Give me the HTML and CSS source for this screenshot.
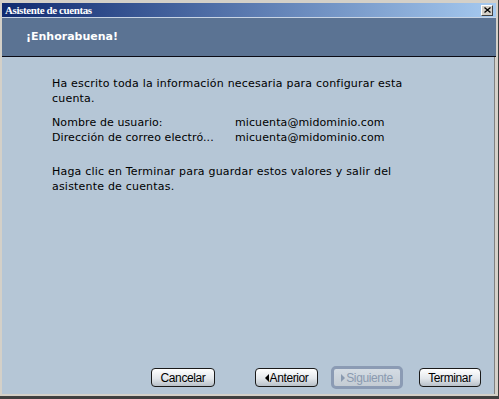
FILE: index.html
```html
<!DOCTYPE html>
<html lang="es">
<head>
  <meta charset="UTF-8" />
  <title>Asistente de cuentas</title>
  <link rel="stylesheet" href="styles.css">
</head>
<body>
<div class="window">
  <div class="titlebar">
    <span class="title">Asistente de cuentas</span>
    <button class="close" aria-label="Cerrar">
      <svg width="7" height="6" viewBox="0 0 7 6"><path d="M0.5 0.5 L6.5 5.5 M6.5 0.5 L0.5 5.5" stroke="#000" stroke-width="1.3" fill="none"/></svg>
    </button>
  </div>
  <div class="header">
    <h1>¡Enhorabuena!</h1>
  </div>
  <main class="body">
    <div class="content">
      <p>Ha escrito toda la información necesaria para configurar esta cuenta.</p>
      <div class="summary">
        <span>Nombre de usuario:</span><span>micuenta@midominio.com</span>
        <span>Dirección de correo electró...</span><span>micuenta@midominio.com</span>
      </div>
      <p>Haga clic en Terminar para guardar estos valores y salir del asistente de cuentas.</p>
    </div>
    <nav class="buttons">
      <button class="btn btn-cancel">Cancelar</button>
      <button class="btn btn-back"><span class="arrow arrow-left"></span>Anterior</button>
      <button class="btn btn-next" disabled><span class="arrow arrow-right"></span>Siguiente</button>
      <button class="btn btn-finish">Terminar</button>
    </nav>
  </main>
</div>
</body>
</html>
```

FILE: styles.css
```css
html, body {
  margin: 0;
  padding: 0;
  width: 499px;
  height: 399px;
  overflow: hidden;
  background: #d4d0c8;
}
.window {
  box-sizing: border-box;
  width: 499px;
  height: 399px;
  padding: 2px 2px 0 2px;
  background: #d4d0c8;
  border-right: 1px solid #404040;
  border-bottom: 3px solid #404040;
  display: flex;
  flex-direction: column;
}
.titlebar {
  height: 14px;
  margin-top: 1px;
  background: linear-gradient(to right, #0f2a70, #a6caf0);
  display: flex;
  align-items: center;
  justify-content: space-between;
  padding: 0 3px 0 3px;
  border-bottom: 1px solid #c8d4e4;
}
.title {
  color: #fff;
  font-family: "Liberation Serif", serif;
  font-weight: bold;
  font-size: 11px;
  letter-spacing: -0.4px;
  line-height: 14px;
}
.close {
  box-sizing: border-box;
  width: 12px;
  height: 11px;
  padding: 0;
  margin: 0;
  background: #d4d0c8;
  border: 1px solid;
  border-color: #fff #404040 #404040 #fff;
  display: flex;
  align-items: center;
  justify-content: center;
}
.header {
  height: 38px;
  background: #5b7393;
  border-bottom: 1px solid #0a0a14;
  display: flex;
  align-items: center;
  padding-left: 24px;
}
.header h1 {
  margin: 0 0 1px 0;
  color: #fff;
  font-family: "DejaVu Sans", sans-serif;
  font-weight: bold;
  font-size: 11px;
}
.body {
  flex: 1;
  background: #b5c6d6;
  display: flex;
  flex-direction: column;
  justify-content: space-between;
  margin-right: 1px;
  border-right: 1px solid #808080;
  margin-bottom: 2px;
}
.content {
  padding: 19px 0 0 50px;
  width: 360px;
  font-family: "DejaVu Sans", sans-serif;
  font-size: 11px;
  letter-spacing: 0.2px;
  line-height: 15px;
  color: #000;
}
.content p {
  margin: 0 0 9px 0;
}
.summary {
  display: grid;
  grid-template-columns: 183px auto;
  margin-bottom: 19px;
  letter-spacing: 0.1px;
}
.buttons {
  display: flex;
  justify-content: flex-end;
  align-items: center;
  padding: 0 13px 5px 0;
}
.btn {
  box-sizing: border-box;
  height: 19px;
  padding: 0 6px;
  margin: 0;
  border: 1px solid #1a1a1a;
  border-radius: 4px;
  background: linear-gradient(to bottom, #ffffff, #e4e8ec 55%, #b8c0c8);
  font-family: "Liberation Sans", sans-serif;
  font-size: 12px;
  letter-spacing: -0.4px;
  color: #000;
  display: flex;
  align-items: center;
  justify-content: center;
}
.btn-cancel { width: 64px; margin-right: 40px; }
.btn-back { width: 63px; margin-right: 13px; }
.btn-next {
  width: 72px;
  height: 23px;
  margin-right: 16px;
  border: 3px solid #8b9bb4;
  border-radius: 5px;
  color: #8a9ab0;
  background: linear-gradient(to bottom, #d4dce4, #c4ccd4);
}
.btn-finish { width: 62px; }
.arrow {
  display: inline-block;
  width: 0;
  height: 0;
  border-top: 4px solid transparent;
  border-bottom: 4px solid transparent;
  margin-right: 1px;
}
.arrow-left { border-right: 4px solid #000; }
.arrow-right { border-left: 4px solid #8a9ab0; }
```
